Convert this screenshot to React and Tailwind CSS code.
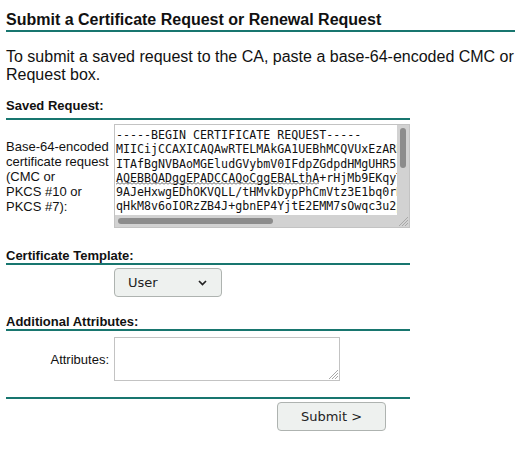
import React from 'react';

const teal = 'border-[#18766f]';

const requestLines = [
  '-----BEGIN CERTIFICATE REQUEST-----',
  'MIICijCCAXICAQAwRTELMAkGA1UEBhMCQVUxEzARBgNVBAgMClNvbWUtU3RhdGUx',
  'ITAfBgNVBAoMGEludGVybmV0IFdpZGdpdHMgUHR5IEx0ZDCCASIwDQYJKoZIhvcN',
  null,
  '9AJeHxwgEDhOKVQLL/tHMvkDypPhCmVtz3E1bq0rK8jUq1yUeOw8nQ2LmGhY3t1a',
  'qHkM8v6oIORzZB4J+gbnEP4YjtE2EMM7sOwqc3u2pZ0Lk5Xh9WdVbT7nRcYq2MeF',
];

// Textarea grip drawn at the bottom-right corner
const Grip = ({ className }) => (
  <svg width="12" height="12" viewBox="0 0 12 12" className={className}>
    <line x1="11" y1="2" x2="2" y2="11" stroke="#a8a8a8" strokeWidth="1" />
    <line x1="11" y1="5" x2="5" y2="11" stroke="#a8a8a8" strokeWidth="1" />
    <line x1="11" y1="8" x2="8" y2="11" stroke="#a8a8a8" strokeWidth="1" />
  </svg>
);

// Spellcheck squiggle under a word
const Squiggle = ({ children }) => (
  <span className="relative">
    {children}
    <svg className="absolute left-0 bottom-[0px] w-full h-[3px] pointer-events-none" preserveAspectRatio="none">
      <defs>
        <pattern id="sq" width="4" height="3" patternUnits="userSpaceOnUse">
          <path d="M0 2.5 L2 0.5 L4 2.5" fill="none" stroke="#444" strokeWidth="0.9" />
        </pattern>
      </defs>
      <rect width="100%" height="3" fill="url(#sq)" />
    </svg>
  </span>
);

const SectionHeader = ({ children, className = '' }) => (
  <div className={`w-[404px] border-b-2 ${teal} text-[13px] font-bold leading-[15px] text-[#111] ${className}`}>
    {children}
  </div>
);

export default function App() {
  return (
    <div
      className="w-[515px] h-[449px] overflow-hidden bg-white pl-[6px] text-[#111]"
      style={{ fontFamily: '"Liberation Sans", Arial, sans-serif' }}
    >
      {/* Title */}
      <div className={`pt-[11px] pb-[1px] border-b-2 ${teal} text-[16px] font-bold leading-[18px] whitespace-nowrap`}>
        Submit a Certificate Request or Renewal Request
      </div>

      <p className="mt-[16px] text-[16px] leading-[18px] whitespace-nowrap">
        To submit a saved request to the CA, paste a base-64-encoded CMC or PKCS #10 certificate request or PKCS #7 renewal request generated by an external source (such as a Web server) in the Saved
        <br />
        Request box.
      </p>

      {/* Saved Request */}
      <SectionHeader className="mt-[14px] pb-[5px]">Saved Request:</SectionHeader>
      <div className="mt-[4px] flex items-center">
        <div className="w-[108px] text-[13px] leading-[15px]">
          Base-64-encoded
          <br />
          certificate request
          <br />
          (CMC or
          <br />
          PKCS #10 or
          <br />
          PKCS #7):
        </div>
        <div className="relative w-[296px] h-[104px] border border-[#c3c3c3] bg-white overflow-hidden">
          <div
            className="pl-[1px] pt-[3px] text-[11.65px] leading-[14.3px] text-[#111] whitespace-pre"
            style={{ fontFamily: '"DejaVu Sans Mono", monospace' }}
          >
            {requestLines.map((l, i) =>
              l === null ? (
                <div key={i}>
                  <Squiggle>AQEBBQADggEPADCCAQoCggEBALthA</Squiggle>
                  +rHjMb9EKqyT3bW8mNcR1sXzQpV4uHgLe
                </div>
              ) : (
                <div key={i}>{l}</div>
              )
            )}
          </div>
          {/* vertical scrollbar */}
          <div className="absolute right-0 top-0 w-[12px] h-[90px] bg-[#d2d2d2]">
            <div className="absolute left-[3px] top-[3px] w-[6px] h-[40px] rounded-full bg-[#8c8c8c]" />
          </div>
          {/* horizontal scrollbar */}
          <div className="absolute left-0 bottom-0 w-[282px] h-[12px] bg-[#d2d2d2]">
            <div className="absolute left-[3px] top-[3px] h-[6px] w-[155px] rounded-full bg-[#8c8c8c]" />
          </div>
          <div className="absolute right-0 bottom-0 w-[12px] h-[12px] bg-[#d2d2d2]">
            <Grip className="absolute right-0 bottom-0" />
          </div>
        </div>
      </div>

      {/* Certificate Template */}
      <SectionHeader className="mt-[20px]">Certificate Template:</SectionHeader>
      <div className="mt-[3px] ml-[108px]">
        <div
          className="w-[108px] h-[29px] rounded-[4px] border border-[#aeb3b0] bg-[#eef1ef] flex items-center justify-between pl-[13px] pr-[14px] text-[13px] text-[#222]"
          style={{ fontFamily: '"DejaVu Sans", sans-serif' }}
        >
          <span>User</span>
          <svg width="9" height="6" viewBox="0 0 9 6">
            <path d="M1 1 L4.5 4.5 L8 1" fill="none" stroke="#222" strokeWidth="1.7" />
          </svg>
        </div>
      </div>

      {/* Additional Attributes */}
      <SectionHeader className="mt-[17px]">Additional Attributes:</SectionHeader>
      <div className="mt-[6px] flex items-center">
        <div className="w-[108px] pr-[5px] text-right text-[13px] leading-[15px]">Attributes:</div>
        <div className="relative w-[226px] h-[44px] border border-[#c3c3c3] bg-white">
          <Grip className="absolute right-0 bottom-0" />
        </div>
      </div>

      <div className={`mt-[16px] w-[404px] border-b-2 ${teal}`} />
      <div className="mt-[3px] ml-[271px]">
        <div
          className="w-[109px] h-[29px] rounded-[4px] border border-[#aeb3b0] bg-[#eef1ef] flex items-center justify-center text-[13px] text-[#222]"
          style={{ fontFamily: '"DejaVu Sans", sans-serif' }}
        >
          Submit &gt;
        </div>
      </div>
    </div>
  );
}
